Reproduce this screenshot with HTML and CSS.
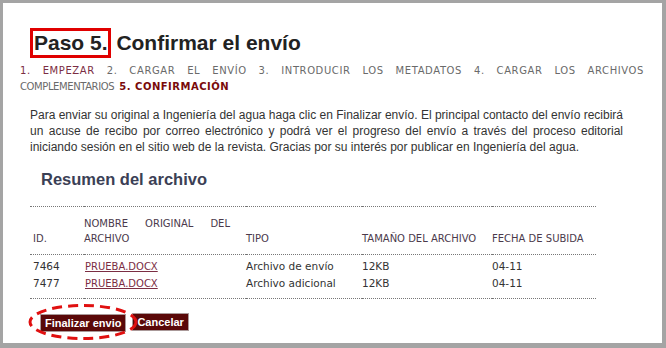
FILE: index.html
```html
<!DOCTYPE html>
<html lang="es">
<head>
  <meta charset="UTF-8">
  <title>Paso 5. Confirmar el envío</title>
  <link rel="stylesheet" href="styles.css">
</head>
<body>

<div class="page">
  <h2 class="title"><span class="mark">Paso 5.</span> Confirmar el envío</h2>

  <p class="steps">
    <span class="steps-line"><span class="step-done">1. EMPEZAR</span> 2. CARGAR EL ENVÍO 3. INTRODUCIR LOS METADATOS 4. CARGAR LOS ARCHIVOS</span>
    <span class="steps-rest">COMPLEMENTARIOS</span> <span class="step-current">5. CONFIRMACIÓN</span>
  </p>

  <p class="intro">Para enviar su original a Ingeniería del agua haga clic en Finalizar envío. El principal contacto del envío recibirá un acuse de recibo por correo electrónico y podrá ver el progreso del envío a través del proceso editorial iniciando sesión en el sitio web de la revista. Gracias por su interés por publicar en Ingeniería del agua.</p>

  <h3 class="summary-title">Resumen del archivo</h3>

  <table class="files">
    <colgroup>
      <col class="c-id">
      <col class="c-name">
      <col class="c-type">
      <col class="c-size">
      <col class="c-date">
    </colgroup>
    <thead>
      <tr>
        <th class="id">ID.</th>
        <th class="name">NOMBRE ORIGINAL DEL ARCHIVO</th>
        <th>TIPO</th>
        <th>TAMAÑO DEL ARCHIVO</th>
        <th>FECHA DE SUBIDA</th>
      </tr>
    </thead>
    <tbody>
      <tr class="first">
        <td class="id">7464</td>
        <td><a href="#">PRUEBA.DOCX</a></td>
        <td>Archivo de envío</td>
        <td>12KB</td>
        <td>04-11</td>
      </tr>
      <tr class="last">
        <td class="id">7477</td>
        <td><a href="#">PRUEBA.DOCX</a></td>
        <td>Archivo adicional</td>
        <td>12KB</td>
        <td>04-11</td>
      </tr>
    </tbody>
  </table>

  <div class="actions">
    <div class="btn-wrap">
      <button class="btn">Finalizar envio</button>
      <!-- annotation ring -->
      <svg class="ring" width="112" height="38" viewBox="0 0 112 38">
        <ellipse cx="56" cy="19" rx="53" ry="16.5" fill="none" stroke="#e01010" stroke-width="3" stroke-dasharray="10 6"/>
      </svg>
    </div>
    <button class="btn">Cancelar</button>
  </div>
</div>

</body>
</html>
```

FILE: styles.css
```css
body {
  margin: 0;
  background-color: #a4a4a4;
  overflow: hidden;
}

.page {
  margin: 3px 4px 5px 3px;
  height: 340px;
  background-color: #fff;
  padding: 25px 18px 0 17px;
  box-sizing: border-box;
  font-family: "Liberation Sans", Arial, sans-serif;
  color: #333;
  overflow: hidden;
}

.title {
  margin: 0 0 0 10px;
  font-size: 21px;
  line-height: 25px;
  font-weight: bold;
  color: #222;
}

.mark {
  display: inline-block;
  border: 3px solid #e00000;
  padding-left: 1px;
  line-height: 24px;
}

.steps {
  margin: 5px 0 0;
  font-family: "DejaVu Sans", Verdana, sans-serif;
  font-size: 10px;
  line-height: 16px;
  color: #6a6a6a;
}

.steps-line {
  display: block;
  letter-spacing: 0.6px;
  text-align: justify;
  text-align-last: justify;
}

.steps-rest {
  letter-spacing: -0.4px;
  margin-right: 2px;
}

.step-done {
  color: #7b2d43;
}

.step-current {
  color: #7a0a0a;
  font-weight: bold;
  letter-spacing: 0.5px;
}

.intro {
  margin: 12px 21px 0 10px;
  font-size: 12px;
  line-height: 16px;
  text-align: justify;
}

.summary-title {
  margin: 14px 0 0 21px;
  font-size: 16.5px;
  line-height: 20px;
  color: #3b4055;
}

.files {
  margin: 17px 0 0 10px;
  width: 566px;
  table-layout: fixed;
  border-collapse: collapse;
  font-family: "DejaVu Sans", Verdana, sans-serif;
  border-top: 1px dotted #777;
  border-bottom: 1px dotted #777;
}

.c-id { width: 54px; }
.c-name { width: 162px; }
.c-type { width: 116px; }
.c-size { width: 130px; }
.c-date { width: 104px; }

.files th {
  font-size: 10px;
  font-weight: normal;
  line-height: 15px;
  color: #4b3a4b;
  text-align: left;
  vertical-align: bottom;
  padding: 9px 0 8px;
  border-bottom: 1px dotted #777;
}

.files th.name {
  text-align: justify;
  padding-right: 16px;
}

.files .id {
  padding-left: 3px;
}

.files td {
  font-size: 10.5px;
  line-height: 17px;
  color: #333;
  padding: 0;
  white-space: nowrap;
}

.files tr.first td {
  padding-top: 3px;
}

.files tr.last td {
  padding-bottom: 6px;
}

.files a {
  color: #7b2d43;
  font-size: 10px;
  margin-left: 1px;
}

.actions {
  display: flex;
  gap: 6px;
  margin: 14px 0 0 20px;
}

.btn-wrap {
  position: relative;
}

.btn {
  height: 18px;
  padding: 0 4px;
  background-color: #5a0808;
  border: 1px solid #a99;
  color: #fff;
  font-family: "Liberation Sans", Arial, sans-serif;
  font-size: 11px;
  font-weight: bold;
  line-height: 16px;
}

.ring {
  position: absolute;
  left: -13px;
  top: -10px;
}
```
